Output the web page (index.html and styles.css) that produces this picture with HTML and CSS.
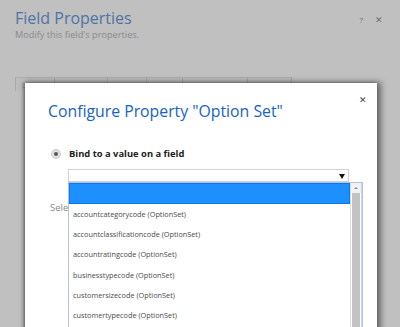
FILE: index.html
```html
<!DOCTYPE html>
<html>
<head>
<meta charset="utf-8">
<link rel="stylesheet" href="styles.css">
</head>
<body>
<div class="page">
  <div class="header">
    <div class="titles">
      <h1 class="title">Field Properties</h1>
      <div class="subtitle">Modify this field's properties.</div>
    </div>
    <div class="header-actions">
      <span class="help">?</span>
      <span class="close">&#x2715;</span>
    </div>
  </div>
  <div class="tabs">
    <span class="tab t1">Display</span>
    <span class="tab t2">Formatting</span>
    <span class="tab t3">Details</span>
    <span class="tab t4">Events</span>
    <span class="tab t5">Business Rules</span>
    <span class="tab t6">Controls</span>
  </div>
</div>

<div class="modal">
  <div class="modal-head">
    <h2 class="modal-title">Configure Property "Option Set"</h2>
    <span class="modal-close">&#x2715;</span>
  </div>
  <div class="option">
    <span class="radio"><span class="dot"></span></span>
    <span class="option-label">Bind to a value on a field</span>
  </div>
  <div class="select">
    <span class="arrow"></span>
  </div>
  <div class="below">Select a static value</div>

  <div class="listbox">
    <div class="items">
      <div class="item selected"></div>
      <div class="item">accountcategorycode (OptionSet)</div>
      <div class="item">accountclassificationcode (OptionSet)</div>
      <div class="item">accountratingcode (OptionSet)</div>
      <div class="item">businesstypecode (OptionSet)</div>
      <div class="item">customersizecode (OptionSet)</div>
      <div class="item">customertypecode (OptionSet)</div>
    </div>
    <div class="scrollbar">
      <div class="sb-up"></div>
      <div class="sb-thumb"></div>
    </div>
  </div>
</div>
</body>
</html>
```
FILE: styles.css
```css
html, body {
  margin: 0;
  padding: 0;
  background: #c0c0c0;
  overflow: hidden;
  width: 400px;
  height: 327px;
  font-family: "Open Sans", "Noto Sans", sans-serif;
}

.page {
  height: 327px;
}

.header {
  display: flex;
  justify-content: space-between;
  padding: 8px 17px 0 15px;
}

.title {
  margin: 0;
  font-weight: 400;
  font-size: 16px;
  line-height: 21px;
  color: #5073a6;
}

.subtitle {
  font-size: 9.2px;
  line-height: 12px;
  color: #8a8a8a;
}

.header-actions {
  display: flex;
  gap: 12px;
  padding-top: 6px;
  color: #6f6f6f;
}

.help { font-size: 8px; line-height: 12px; }
.close { font-size: 9px; line-height: 12px; }

.tabs {
  display: flex;
  margin: 36px 0 0 15px;
  height: 14px;
}

.tab {
  font-size: 7px;
  color: #9a9a9a;
  padding: 4px 0 0 6px;
  border-top: 1px solid #aeaeae;
  border-right: 1px solid #a9a9a9;
  line-height: 8px;
  background: #bdbdbd;
  overflow: hidden;
  white-space: nowrap;
  box-sizing: border-box;
}
.t1 { border-left: 1px solid #a9a9a9; width: 40px; }
.t2 { width: 53px; }
.t3 { width: 39px; }
.t4 { width: 36px; }
.t5 { width: 65px; }
.t6 { width: 44px; }

.modal {
  position: absolute;
  left: 25px;
  top: 83px;
  width: 352px;
  height: 260px;
  background: #fff;
  box-shadow: 2px 1px 6px 2px rgba(0,0,0,0.45), -1px 0 3px rgba(0,0,0,0.35);
}

.modal-head {
  display: flex;
  justify-content: space-between;
  align-items: flex-start;
  padding: 17px 10px 0 23px;
}

.modal-title {
  margin: 0;
  font-weight: 400;
  font-size: 15.8px;
  line-height: 22px;
  color: #1763bf;
}

.modal-close {
  font-size: 9px;
  color: #444;
  line-height: 12px;
  margin-top: -6px;
}

.option {
  display: flex;
  align-items: center;
  padding: 25px 0 0 26px;
}

.radio {
  width: 8px;
  height: 8px;
  border-radius: 50%;
  background: #e2e2e2;
  border: 1px solid #c8c8c8;
  display: flex;
  align-items: center;
  justify-content: center;
  margin-right: 8px;
}
.dot {
  width: 4px;
  height: 4px;
  border-radius: 50%;
  background: #555;
}

.option-label {
  font-size: 9.4px;
  font-weight: 700;
  color: #222;
  line-height: 14px;
}

.select {
  margin: 8px 0 0 43px;
  width: 279px;
  height: 11px;
  border: 1px solid #d2d2d2;
  position: relative;
}
.arrow {
  position: absolute;
  right: 3px;
  top: 4px;
  width: 0;
  height: 0;
  border-left: 3px solid transparent;
  border-right: 3px solid transparent;
  border-top: 5px solid #111;
}

.below {
  margin: 20px 0 0 25px;
  font-size: 9.5px;
  line-height: 12px;
  color: #888;
}

.listbox {
  position: absolute;
  left: 43px;
  top: 99px;
  width: 293px;
  height: 170px;
  display: flex;
  border: 1px solid #b3c3e0;
  border-bottom: none;
  background: #fff;
}

.items {
  flex: 1;
}

.item {
  height: 20.4px;
  line-height: 20px;
  font-size: 7.3px;
  color: #4a4a4a;
  padding-left: 4px;
  white-space: nowrap;
}
.item.selected {
  background: #1e8fff;
  border: 1px solid #0a78ee;
  height: 18.5px;
}

.scrollbar {
  width: 10px;
  background: #fff;
  border-left: 1px solid #d8dde8;
  border-right: 1px solid #c9d6ec;
  display: flex;
  flex-direction: column;
}
.sb-up {
  height: 10px;
  position: relative;
  background: #f2f2f2;
}
.sb-up::after {
  content: "";
  position: absolute;
  left: 3px;
  top: 4px;
  border-left: 2px solid transparent;
  border-right: 2px solid transparent;
  border-bottom: 2px solid #888;
}
.sb-thumb {
  flex: 1;
  background: #c3c3c3;
  margin: 0 1px;
}
```
